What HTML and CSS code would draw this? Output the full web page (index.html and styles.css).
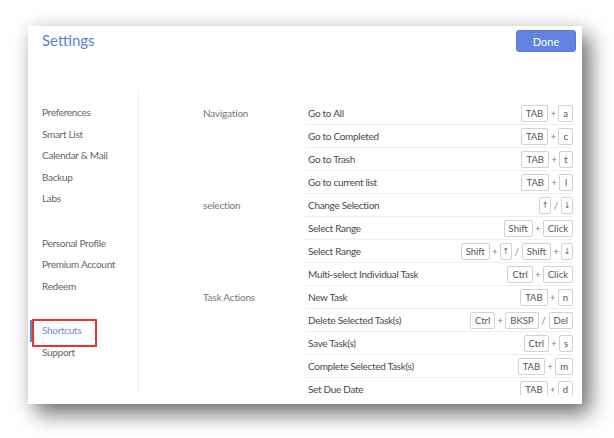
FILE: index.html
```html
<!DOCTYPE html>
<html lang="en">
<head>
<meta charset="utf-8">
<title>Settings</title>
<link rel="stylesheet" href="styles.css">
</head>
<body>
<div class="panel">
  <header class="head">
    <h1 class="title">Settings</h1>
    <button class="done">Done</button>
  </header>
  <div class="body">
    <nav class="side">
      <ul class="group">
        <li class="item">Preferences</li>
        <li class="item">Smart List</li>
        <li class="item">Calendar &amp; Mail</li>
        <li class="item">Backup</li>
        <li class="item">Labs</li>
      </ul>
      <ul class="group">
        <li class="item">Personal Profile</li>
        <li class="item">Premium Account</li>
        <li class="item">Redeem</li>
      </ul>
      <ul class="group">
        <li class="item active">Shortcuts</li>
        <li class="item">Support</li>
      </ul>
    </nav>
    <main class="content">
      <section class="sec">
        <div class="cat">Navigation</div>
        <ul class="rows">
          <li class="row"><span class="lbl">Go to All</span><span class="keys"><kbd>TAB</kbd><i>+</i><kbd>a</kbd></span></li>
          <li class="row"><span class="lbl">Go to Completed</span><span class="keys"><kbd>TAB</kbd><i>+</i><kbd>c</kbd></span></li>
          <li class="row"><span class="lbl">Go to Trash</span><span class="keys"><kbd>TAB</kbd><i>+</i><kbd>t</kbd></span></li>
          <li class="row"><span class="lbl">Go to current list</span><span class="keys"><kbd>TAB</kbd><i>+</i><kbd>l</kbd></span></li>
        </ul>
      </section>
      <section class="sec">
        <div class="cat">selection</div>
        <ul class="rows">
          <li class="row"><span class="lbl">Change Selection</span><span class="keys"><kbd class="arr">↑</kbd><i>/</i><kbd class="arr">↓</kbd></span></li>
          <li class="row"><span class="lbl">Select Range</span><span class="keys"><kbd>Shift</kbd><i>+</i><kbd>Click</kbd></span></li>
          <li class="row"><span class="lbl">Select Range</span><span class="keys"><kbd>Shift</kbd><i>+</i><kbd class="arr">↑</kbd><i>/</i><kbd>Shift</kbd><i>+</i><kbd class="arr">↓</kbd></span></li>
          <li class="row"><span class="lbl">Multi-select Individual Task</span><span class="keys"><kbd>Ctrl</kbd><i>+</i><kbd>Click</kbd></span></li>
        </ul>
      </section>
      <section class="sec">
        <div class="cat">Task Actions</div>
        <ul class="rows">
          <li class="row"><span class="lbl">New Task</span><span class="keys"><kbd>TAB</kbd><i>+</i><kbd>n</kbd></span></li>
          <li class="row"><span class="lbl">Delete Selected Task(s)</span><span class="keys"><kbd>Ctrl</kbd><i>+</i><kbd>BKSP</kbd><i>/</i><kbd>Del</kbd></span></li>
          <li class="row"><span class="lbl">Save Task(s)</span><span class="keys"><kbd>Ctrl</kbd><i>+</i><kbd>s</kbd></span></li>
          <li class="row"><span class="lbl">Complete Selected Task(s)</span><span class="keys"><kbd>TAB</kbd><i>+</i><kbd>m</kbd></span></li>
          <li class="row"><span class="lbl">Set Due Date</span><span class="keys"><kbd>TAB</kbd><i>+</i><kbd>d</kbd></span></li>
        </ul>
      </section>
    </main>
  </div>
</div>
</body>
</html>
```

FILE: styles.css
```css
* { box-sizing: border-box; }
html, body {
  margin: 0;
  padding: 0;
  background: #ffffff;
  width: 614px;
  height: 438px;
  overflow: hidden;
  font-family: Lato, "Open Sans", sans-serif;
}
ul { list-style: none; margin: 0; padding: 0; }

.panel {
  margin: 26px 0 0 28px;
  width: 554px;
  height: 378px;
  background: #fff;
  box-shadow: 8px 10px 20px rgba(0, 0, 0, 0.55), 0 0 18px rgba(0, 0, 0, 0.08);
  padding-bottom: 9px;
  display: flex;
  flex-direction: column;
}

.head {
  height: 64px;
  flex: none;
  display: flex;
  justify-content: space-between;
  align-items: flex-start;
  padding: 4px 6px 0 14px;
}
.title {
  margin: 0;
  font-weight: 400;
  font-size: 15px;
  line-height: 20px;
  color: #5d7ee0;
}
.done {
  width: 60px;
  height: 22px;
  border: 1px solid #5a79d9;
  border-radius: 3px;
  background: #6283e1;
  color: #fff;
  font-family: inherit;
  font-size: 11px;
  padding: 0;
}

.body {
  flex: 1;
  display: flex;
  min-height: 0;
}
.side {
  width: 111px;
  flex: none;
  border-right: 1px solid #f0f0f0;
  padding-top: 12px;
  display: flex;
  flex-direction: column;
  gap: 22.6px;
}
.item {
  position: relative;
  height: 21.6px;
  line-height: 21.6px;
  padding-left: 14px;
  font-size: 10px;
  letter-spacing: -0.3px;
  color: #666;
}
.item.active {
  color: #6a89e4;
}
.item.active::before {
  content: "";
  position: absolute;
  left: 2px;
  top: 0;
  width: 2px;
  height: 22px;
  background: #5b7fe0;
}
.item.active::after {
  content: "";
  position: absolute;
  left: 4px;
  top: -1px;
  width: 61px;
  height: 24px;
  border: 2px solid #e53535;
}

.content {
  flex: 1;
  overflow: hidden;
  padding: 12px 9px 0 64px;
}
.sec {
  display: grid;
  grid-template-columns: 103px 1fr;
}
.cat {
  font-size: 10px;
  letter-spacing: -0.2px;
  line-height: 22px;
  color: #777;
}
.row {
  height: 23px;
  border-bottom: 1px solid #efefef;
  display: flex;
  align-items: center;
  justify-content: space-between;
  padding-left: 2px;
}
.lbl {
  font-size: 10px;
  letter-spacing: -0.3px;
  color: #4a4a4a;
}
.keys {
  display: flex;
  align-items: center;
}
.keys kbd {
  font-family: inherit;
  font-size: 9.5px;
  height: 17px;
  line-height: 15px;
  min-width: 14px;
  padding: 0 4px;
  text-align: center;
  border: 1px solid #d2d2d2;
  border-radius: 2px;
  color: #555;
  background: #fff;
}
.keys kbd.arr {
  min-width: 12px;
  padding: 0 1px;
  font-size: 8.5px;
  font-family: "DejaVu Sans", sans-serif;
  color: #666;
}
.keys i {
  font-style: normal;
  font-size: 9px;
  color: #777;
  margin: 0 2px;
  width: 6px;
  text-align: center;
}
```
